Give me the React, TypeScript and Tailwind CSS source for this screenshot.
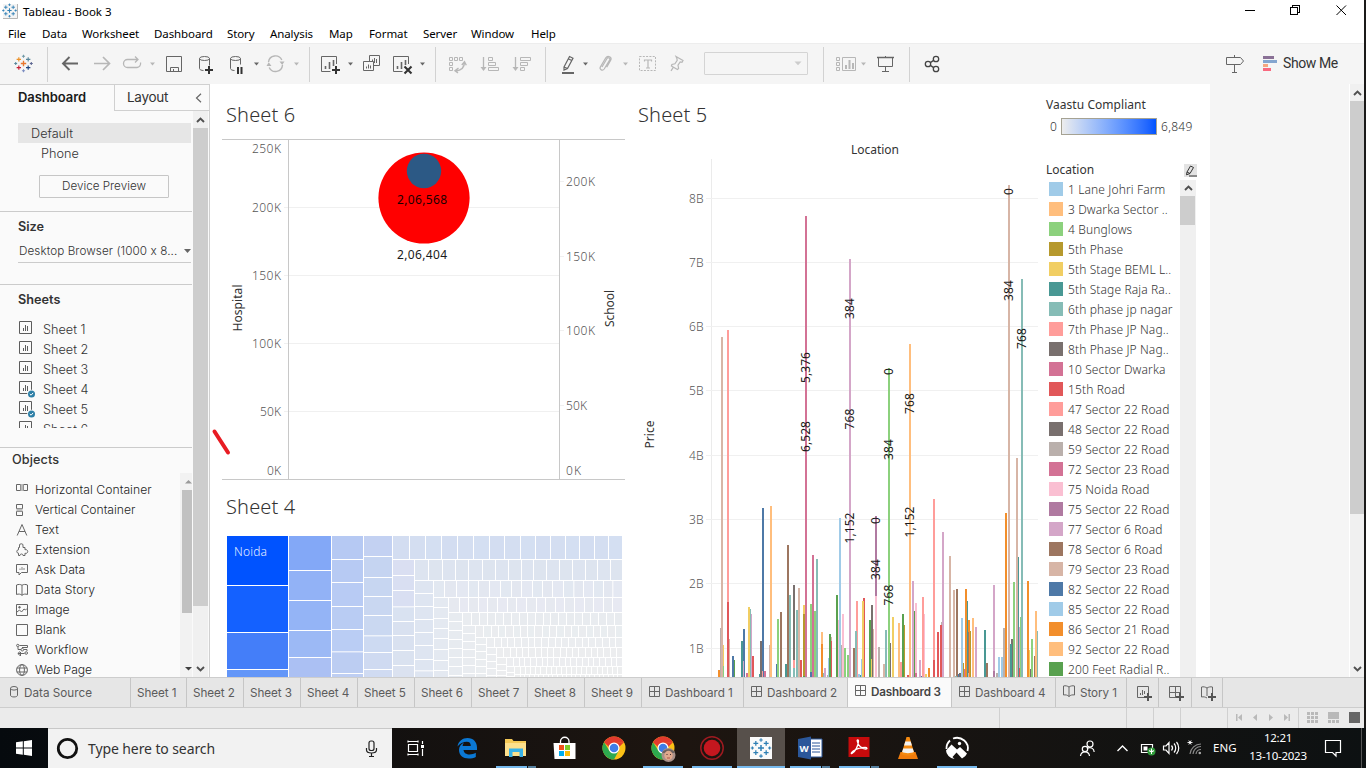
import React from "react";

const TABLEAU = "font-['Noto_Sans',sans-serif]";
const BENTON = "font-['Inter',sans-serif]";

type CellProps = { x: number; w: number; y?: number; h?: number; className?: string; children?: React.ReactNode };

/* Fixed-size drawing cell; its coordinates are window coordinates. */
function Cell({ x, w, y = 44, h = 40, className = "", children }: CellProps) {
  return (
    <svg width={w} height={h} viewBox={`${x} ${y} ${w} ${h}`} className={`block shrink-0 ${className}`} fill="none">
      {children}
    </svg>
  );
}

const Sep = ({ x }: { x: number }) => <path d={`M${x + 0.5} 47V82`} stroke="#d2d2d2" />;
const Caret = ({ x, c = "#666" }: { x: number; c?: string }) => <path d={`M${x - 2.5} 62.5h5l-2.5 3z`} fill={c} />;

function Plus({ x, y, s, c, w = 1 }: { x: number; y: number; s: number; c: string; w?: number }) {
  return <path d={`M${x - s} ${y}h${2 * s}M${x} ${y - s}v${2 * s}`} stroke={c} strokeWidth={w} />;
}

function TableauMark({ x, y, k, mono }: { x: number; y: number; k: number; mono?: string }) {
  const c = (s: string) => mono ?? s;
  return (
    <g>
      <Plus x={x} y={y} s={2.6 * k} c={c("#e8762d")} w={1.3 * k} />
      <Plus x={x - 4.5 * k} y={y - 4 * k} s={2.1 * k} c={c("#eb9129")} w={1.1 * k} />
      <Plus x={x + 4.5 * k} y={y - 4 * k} s={2.1 * k} c={c("#59879b")} w={1.1 * k} />
      <Plus x={x - 4.5 * k} y={y + 4 * k} s={2.1 * k} c={c("#c72035")} w={1.1 * k} />
      <Plus x={x + 4.5 * k} y={y + 4 * k} s={2.1 * k} c={c("#1f447e")} w={1.1 * k} />
      <Plus x={x} y={y - 7 * k} s={1.5 * k} c={c("#7199a6")} w={k} />
      <Plus x={x} y={y + 7 * k} s={1.5 * k} c={c("#7c8dc1")} w={k} />
      <Plus x={x - 7.5 * k} y={y} s={1.4 * k} c={c("#59879b")} w={k} />
      <Plus x={x + 7.5 * k} y={y} s={1.4 * k} c={c("#5b6591")} w={k} />
    </g>
  );
}

function TitleBar() {
  return (
    <div className="flex h-[24px] shrink-0 items-center bg-white">
      <Cell x={0} w={22} y={0} h={24}>
        <rect x="3" y="4" width="14" height="14" fill="#f4f4f4" />
        <path d="M3 18.5h14.5V4" stroke="#b5b5b5" />
        <TableauMark x={9.5} y={10.5} k={0.82} mono="#2f7fb5" />
      </Cell>
      <span className={`${TABLEAU} flex-1 pl-[1px] text-[11.5px] leading-[24px] tracking-[-0.02px] text-black`}>Tableau - Book 3</span>
      <Cell x={1230} w={134} y={0} h={24}>
        <g stroke="#000" shapeRendering="crispEdges">
          <path d="M1245 10.5h10" />
          <path d="M1290.5 7.5h7v7h-7zM1292.5 7V5.5h7v7h-2" />
        </g>
        <path d="M1336.5 5.5l9.500 9.500M1346 5.500l-9.500 9.500" stroke="#000" />
      </Cell>
    </div>
  );
}

const MENUS: [string, string][] = [
  ["File", "w-[34px]"], ["Data", "w-[40px]"], ["Worksheet", "w-[72px]"], ["Dashboard", "w-[73px]"],
  ["Story", "w-[43px]"], ["Analysis", "w-[59px]"], ["Map", "w-[40px]"], ["Format", "w-[54px]"],
  ["Server", "w-[48px]"], ["Window", "w-[60px]"], ["Help", "w-[40px]"],
];

function MenuBar() {
  return (
    <div className={`${TABLEAU} flex h-[19px] shrink-0 bg-white pl-2 text-[11.5px] leading-[19px] tracking-[-0.1px] text-black`}>
      {MENUS.map(([m, w]) => (
        <span key={m} className={`${w} shrink-0 whitespace-nowrap`}>{m}</span>
      ))}
    </div>
  );
}

function Toolbar() {
  const d = "#666";
  const g = "#b7b7b7";
  const k = "#333";
  return (
    <div className="flex h-[41px] shrink-0 border-t border-[#ededed] bg-[#f5f5f5]">
      <Cell x={0} w={48}>
        <TableauMark x={23.5} y={63.5} k={1.04} />
        <Sep x={47} />
      </Cell>
      <Cell x={48} w={70}>
        <path d="M63 63.500H78M69.500 57L63 63.500l6.500 6.500" stroke={d} strokeWidth="1.900" />
        <path d="M94 63.500h15M103 57l6.500 6.500L103 70" stroke={g} strokeWidth="1.700" />
      </Cell>
      <Cell x={118} w={42}>
        <path d="M132 59.500h-4.500a4 4 0 0 0 0 8h9.500a4 4 0 0 0 3.500-5M130.500 59.500h7M135 56.500l3 3-3 3" stroke={g} strokeWidth="1.300" />
        <Caret x={152.5} c={g} />
      </Cell>
      <Cell x={160} w={30}>
        <path d="M166.500 56.500h15v15h-15zM170.500 71.500v-4h8v4M173.500 69v2.500" stroke={d} />
      </Cell>
      <Cell x={190} w={74}>
        <ellipse cx="204.500" cy="58.500" rx="5" ry="2" stroke={d} />
        <path d="M199.500 58.500v10c0 1.200 2 2 4 2M209.500 58.500v7" stroke={d} />
        <Plus x={209} y={70} s={4} c={k} w={2} />
        <ellipse cx="235.500" cy="58.500" rx="5" ry="2" stroke={d} />
        <path d="M230.500 58.500v10c0 1.200 2 2 4 2M240.500 58.500v6" stroke={d} />
        <path d="M238 67v7M241.500 67v7" stroke={k} strokeWidth="2" />
        <Caret x={256.5} />
      </Cell>
      <Cell x={264} w={46}>
        <path d="M268.500 62a7 7 0 0 1 13.300-2M282.500 65a7 7 0 0 1-13.300 2.500" stroke={g} strokeWidth="1.400" />
        <path d="M279.500 61.500h5l-2.300 3.500zM266.500 66h5l-2.800-3.800z" fill={g} />
        <Caret x={296.5} c={g} />
        <Sep x={309} />
      </Cell>
      <Cell x={310} w={46}>
        <path d="M336.500 64v-7.500h-15v15h9" stroke={d} />
        <path d="M325.500 69v-3M329.500 69v-7M333.500 66v-6" stroke={d} strokeWidth="1.600" />
        <Plus x={336} y={70} s={4} c={k} w={2} />
        <Caret x={350.5} />
      </Cell>
      <Cell x={356} w={80}>
        <path d="M369.500 61v-5.500h10v10h-5.500M370 61.500h-6.500v9h10v-9z" stroke={d} />
        <path d="M372.500 61v-1.500M374.500 63v-5M376.500 63v-4M366.500 68.500v-2M368.500 68.500v-4M370.500 68.500v-3" stroke={d} />
        <path d="M408.500 64v-7.500h-15v15h9" stroke={d} />
        <path d="M397.500 69v-3M401.500 69v-7M405.500 65v-5" stroke={d} strokeWidth="1.600" />
        <path d="M404.500 66.500l7 7M411.500 66.500l-7 7" stroke={k} strokeWidth="2.100" />
        <Caret x={422.5} />
        <Sep x={435} />
      </Cell>
      <Cell x={436} w={110}>
        <path d="M449.500 57.500h3v3h-3zM454.500 57.500h3v3h-3zM459.500 57.500h3v3h-3zM449.500 62.500h3v3h-3zM449.500 67.500h3v3h-3z" stroke={g} />
        <path d="M464.500 62c0 5-3 8.500-9 9M461.800 65l2.700-3.300 1.800 3.500M458.500 68l-3.500 2.800 3 2" stroke={g} strokeWidth="1.400" />
        <path d="M483.500 57v12" stroke={g} strokeWidth="1.300" /><path d="M480.500 67h6l-3 4z" fill={g} />
        <path d="M488.500 57.500h4v3h-4zM488.500 62.500h7v3h-7zM488.500 67.500h10v3h-10z" stroke={g} />
        <path d="M515.500 57v12" stroke={g} strokeWidth="1.300" /><path d="M512.500 67h6l-3 4z" fill={g} />
        <path d="M520.500 57.500h10v3h-10zM520.500 62.500h7v3h-7zM520.500 67.500h4v3h-4z" stroke={g} />
        <Sep x={545} />
      </Cell>
      <Cell x={546} w={48}>
        <path d="M562 73h12" stroke={d} strokeWidth="2" />
        <path d="M564 67l5.500-10.500 3.500 1.800L567.500 68.500l-3.500 1.500zM564 67l3.500 1.500M568.300 58.800l3.400 1.700" stroke={d} strokeWidth="1.200" />
        <Caret x={585.5} />
      </Cell>
      <Cell x={594} w={106}>
        <path d="M602 67l5-8.500c1-1.700 3.500-.3 2.600 1.500l-5.400 9c-1.600 2.400-5 .5-3.900-1.900l5.500-9.300c2-3 6.500-.8 4.900 2.500l-4 7" stroke={g} strokeWidth="1.200" />
        <Caret x={625.5} c={g} />
        <rect x="639.500" y="56.500" width="16" height="14" stroke={g} strokeDasharray="2 1.300" />
        <path d="M644.500 61.500v-1.500h7v1.500M648 60v8M646 68h4" stroke={g} strokeWidth="1.200" />
        <path d="M676 56.500l7 4-1 1.800-1.800-.3-2.200 3.200.6 3.300-1.200 1.100-6-3.600.5-1.500 3-.7 2.300-3.500-.3-1.800zM673.600 66.800l-2.600 4" stroke={g} strokeWidth="1.200" />
      </Cell>
      <div className="mt-[8px] ml-[4px] flex h-[23px] w-[104px] items-center justify-end rounded-[1px] border border-[#d4d4d4] pr-[5px]">
        <svg width="8" height="5" viewBox="0 0 8 5"><path d="M.5 .5h7L4 4.200z" fill="#ccc" /></svg>
      </div>
      <Cell x={808} w={16}><Sep x={823} /></Cell>
      <Cell x={824} w={86}>
        <path d="M836.500 57.500h3v3h-3zM836.500 62.500h3v3h-3zM836.500 67.500h3v3h-3zM842.500 57.500h13v13h-13z" stroke={g} />
        <path d="M846 69v-4M849.500 69v-9M853 69v-6" stroke={g} strokeWidth="2" />
        <Caret x={863.5} c={g} />
        <path d="M877 57.500h17" stroke={d} strokeWidth="1.500" />
        <path d="M878.500 58v8.500h14V58M885.500 67v4M882 71.500h7M885.500 56v1" stroke={d} />
        <Sep x={909} />
      </Cell>
      <Cell x={910} w={50}>
        <g stroke="#444" strokeWidth="1.300">
          <circle cx="928" cy="64" r="2.700" /><circle cx="936" cy="59" r="2.700" /><circle cx="936" cy="69" r="2.700" />
          <path d="M930.300 62.600l3.400-2.200M930.300 65.400l3.400 2.200" />
        </g>
      </Cell>
      <div className="flex-1" />
      <Cell x={1210} w={73}>
        <path d="M1226.500 57.500h14l3 3.500-3 3.500h-14zM1234.500 55v2.500M1234.500 65v7M1232 72.500h5" stroke={d} />
        <path d="M1263 56h11v3h-11z" fill="#8a7196" /><path d="M1263 60h14v3h-14z" fill="#84a5cf" />
        <path d="M1263 64h5v3h-5z" fill="#f5a67f" /><path d="M1263 68h8v3h-8z" fill="#f9697f" />
      </Cell>
      <span className="w-[81px] font-['Roboto',sans-serif] text-[14px] leading-[39px] tracking-[-0.4px] text-[#333]">Show Me</span>
    </div>
  );
}

const Chevron = ({ down = false }: { down?: boolean }) => (
  <svg width="9" height="6" viewBox="0 0 9 6" className={down ? "rotate-180" : ""}>
    <path d="M1 5L4.500 1.500 8 5" fill="none" stroke="#505050" strokeWidth="1.900" />
  </svg>
);

function SheetIcon({ used }: { used?: boolean }) {
  return (
    <svg width="18" height="20" viewBox="0 0 18 20" fill="none" className="shrink-0">
      <path d="M.5 2.500h12v12H.5z" stroke="#5c5c5c" />
      <path d="M4.500 12V9M6.500 12V6M8.500 12V7" stroke="#5c5c5c" />
      {used && (
        <g>
          <circle cx="12.500" cy="15" r="4.300" fill="#fafafa" />
          <circle cx="12.500" cy="15" r="3.500" fill="#2d7fa6" />
          <path d="M10.800 15l1.300 1.200 2-2.300" stroke="#fff" />
        </g>
      )}
    </svg>
  );
}

const OBJECTS: [string, React.ReactNode, string][] = [
  ["Horizontal Container", <><path d="M.5 4.500h4v6h-4zM7.500 4.500h4v6h-4z" /><path d="M5 4.500h2v6H5z" fill="#bbb" stroke="#bbb" /></>, "tracking-[0.02px]"],
  ["Vertical Container", <><path d="M.5 4.500h6v4h-6zM.5 11.500h6v4h-6z" /><path d="M1 9h5v2H1z" fill="#bbb" stroke="#bbb" /></>, "tracking-[-0.02px]"],
  ["Text", <path d="M1.200 15.500L6 4.500l4.800 11M3 11.500h6" />, ""],
  ["Extension", <path d="M3.500 7.500V6a1.800 1.800 0 1 1 3.500 0v1.500h2v2.300a1.900 1.900 0 1 1 0 3.400v2.300H7a1.500 1.500 0 1 0-3 0H2.500v-2.300a1.700 1.700 0 1 1 0-3.400V7.500z" />, ""],
  ["Ask Data", <><path d="M.5 4.500h11v8H5.500L3 15v-2.500H.5z" /><path d="M4 10V8.500M6 10V7M8 10V8" stroke="#aaa" strokeWidth="1.500" /></>, ""],
  ["Data Story", <path d="M.5 5c2-.8 4-.8 5.500.3C7.500 4.200 9.500 4.200 11.500 5v9.500c-2-.8-4-.5-5.500.8-1.500-1.300-3.500-1.600-5.500-.8zM6 5.300v10" />, "tracking-[0.1px]"],
  ["Image", <><path d="M.5 4.500h11v11H.5z" /><path d="M1 12l2.500-2 2 2 2.500-3 1.500 1L11 8.500" /><circle cx="3.500" cy="7.300" r=".8" fill="#666" /></>, "tracking-[-0.1px]"],
  ["Blank", <path d="M.5 4.500h11v11H.5z" />, ""],
  ["Workflow", <><circle cx="1.800" cy="5.500" r="1.200" /><path d="M3.500 5.500h8v2H6M2 7v2.500h3" /><circle cx="6.300" cy="9.700" r="1.300" /><circle cx="10.200" cy="13" r="1.300" /><path d="M8 9.500h3v1.500M8.500 13.500H2M4 11.500l-2.200 2 2.200 2M4.500 12v4" /></>, ""],
  ["Web Page", <><circle cx="6" cy="10" r="5.400" /><ellipse cx="6" cy="10" rx="2.400" ry="5.400" /><path d="M.8 8h10.400M.8 12h10.400" /></>, "tracking-[-0.1px]"],
];

function Sidebar() {
  return (
    <div className={`${BENTON} flex w-[210px] shrink-0 flex-col overflow-hidden border-t border-r border-[#d0d0d0] bg-[#fafafa] text-[12.700px] font-light text-[#333]`}>
      <div className="flex h-[26px] shrink-0">
        <div className="w-[114px] pl-[18px] text-[13px] leading-[25px] font-semibold tracking-[-0.05px] text-[#1b1b1b]">Dashboard</div>
        <div className="flex flex-1 items-center justify-between border-b border-l border-[#d0d0d0] pr-[7px] pl-[12px] text-[13.500px] leading-[25px] font-normal text-[#333]">
          <span className="tracking-[-0.3px]">Layout</span>
          <svg width="7" height="10" viewBox="0 0 7 10"><path d="M6 .8L1.500 5 6 9.200" fill="none" stroke="#666" strokeWidth="1.200" /></svg>
        </div>
      </div>
      <div className="flex min-h-0 flex-1">
        <div className="flex w-[192px] shrink-0 flex-col overflow-hidden">
          <div className="flex h-[101px] shrink-0 flex-col border-b border-[#cbcbcb] pt-[12px]">
            <div className="ml-[18px] h-[20px] w-[173px] bg-[#e6e6e6] pl-[13px] leading-[21px]">Default</div>
            <div className="h-[20px] pl-[41px] leading-[21px]">Phone</div>
            <div className="mt-[12px] ml-[39px] h-[23px] w-[130px] rounded-[1px] border border-[#c6c6c6] text-center text-[11.700px] leading-[21px]">Device Preview</div>
          </div>
          <div className="flex h-[73px] shrink-0 flex-col border-b border-[#cbcbcb] pl-[18px]">
            <div className="mt-[5px] h-[20px] text-[12.700px] leading-[20px] font-semibold text-[#333]">Size</div>
            <div className="mt-[2px] flex h-[24px] w-[173px] items-center justify-between border-b border-[#cbcbcb] pl-[1px] text-[11.700px] tracking-[0.08px]">
              <span className="pt-[2px]">Desktop Browser (1000 x 8...</span>
              <svg width="7" height="4" viewBox="0 0 7 4"><path d="M0 0h7L3.500 4z" fill="#666" /></svg>
            </div>
          </div>
          <div className="h-[163px] shrink-0 border-b border-[#cbcbcb] pl-[18px]">
            <div className="mt-[4px] h-[20px] text-[12.700px] leading-[21px] font-semibold text-[#333]">Sheets</div>
            <div className="mt-[10px] flex h-[109px] flex-col overflow-hidden pl-[1px]">
              {[1, 2, 3, 4, 5, 6].map((n) => (
                <div key={n} className="flex h-[20px] shrink-0 leading-[22px]">
                  <SheetIcon used={n === 4 || n === 5} />
                  <span className="pl-[6px]">Sheet {n}</span>
                </div>
              ))}
            </div>
          </div>
          <div className="flex min-h-0 flex-1 flex-col">
            <div className="h-[25px] shrink-0 pl-[12px] text-[12.700px] leading-[24px] font-medium tracking-[0.1px] text-[#333]">Objects</div>
            <div className="flex min-h-0 flex-1">
              <div className="flex w-[180px] flex-col overflow-hidden pt-[7px] pl-[16px] text-[12.200px] text-[#1f1f1f]">
                {OBJECTS.map(([name, art, tr]) => (
                  <div key={name} className="flex h-[20px] shrink-0 leading-[20px]">
                    <svg width="13" height="20" viewBox="0 0 13 20" fill="none" stroke="#666" className="shrink-0">{art}</svg>
                    <span className={`pl-[6px] whitespace-nowrap ${tr}`}>{name}</span>
                  </div>
                ))}
              </div>
              <div className="flex w-[12px] flex-col items-end bg-[#f2f2f2]">
                <svg width="10" height="17" viewBox="0 0 10 17" className="shrink-0"><path d="M3 10.500L6.500 7 10 10.500z" fill="#999" /></svg>
                <div className="h-[123px] w-[10px] shrink-0 bg-[#c1c1c1]" />
                <svg width="10" height="17" viewBox="0 0 10 17" className="mt-auto shrink-0"><path d="M3 7h7L6.500 10.500z" fill="#404040" /></svg>
              </div>
            </div>
          </div>
        </div>
        <div className="ml-[1px] flex w-[15px] shrink-0 flex-col items-center bg-[#f0f0f0]">
          <div className="flex h-[17px] shrink-0 items-center"><Chevron /></div>
          <div className="h-[478px] w-full shrink-0 bg-[#cdcdcd]" />
          <div className="mt-auto flex h-[17px] shrink-0 items-center"><Chevron down /></div>
        </div>
      </div>
    </div>
  );
}

type TProps = { x: number; y: number; len?: number; a?: "start" | "middle" | "end"; c?: string; s?: number; children: React.ReactNode; w?: number };
function T({ x, y, len, a = "start", c = "#555", s = 12, w = 300, children }: TProps) {
  return (
    <text x={x} y={y + s * 0.36} textLength={len} textAnchor={a} fill={c} fontSize={s} fontWeight={w}>{children}</text>
  );
}
function V({ x, y, len, s = 12, c = "#1a1a1a", children }: { x: number; y: number; len: number; s?: number; c?: string; children: React.ReactNode }) {
  return (
    <text transform={`translate(${x + s * 0.36} ${y}) rotate(-90)`} textLength={len} textAnchor="middle" fill={c} fontSize={s}>{children}</text>
  );
}

function BubbleChart() {
  return (
    <Cell x={210} y={139} w={415} h={341} className={TABLEAU}>
      <g stroke="#f0f0f0">
        {[207.5, 275.5, 343.5, 411.5].map((y) => <path key={y} d={`M284 ${y}H559`} />)}
        {[181.5, 256.5, 330.5, 405.5].map((y) => <path key={y} d={`M560 ${y}h4`} />)}
      </g>
      <path d="M222 139.500H625M222 479.500H625M288.500 140V479M559.500 140V479" stroke="#c8c8c8" />
      <circle cx="424" cy="198" r="45.600" fill="#f00" />
      <circle cx="424" cy="171" r="17.200" fill="#2c5985" />
      <T x={281} y={149} a="end" len={29}>250K</T>
      <T x={281} y={208} a="end" len={29}>200K</T>
      <T x={281} y={276} a="end" len={29}>150K</T>
      <T x={281} y={344} a="end" len={29}>100K</T>
      <T x={281} y={412} a="end" len={21}>50K</T>
      <T x={281} y={471} a="end" len={14}>0K</T>
      <T x={566} y={182} len={29}>200K</T>
      <T x={566} y={257} len={29}>150K</T>
      <T x={566} y={331} len={29}>100K</T>
      <T x={566} y={406} len={21}>50K</T>
      <T x={566} y={471} len={15}>0K</T>
      <T x={397} y={200} len={50} c="#1a0000" w={400}>2,06,568</T>
      <T x={397} y={255} len={50} c="#1a1a1a" w={400}>2,06,404</T>
      <V x={238} y={308} len={47} c="#333">Hospital</V>
      <V x={610} y={308.500} len={37} c="#333">School</V>
      <path d="M214.500 431.500L228 452.500" stroke="#e81c23" strokeWidth="4" strokeLinecap="round" />
    </Cell>
  );
}

/* Tree map strips in a 3x grid: columns are split vertically, rows horizontally. */
type Strip = { a: number; b: number; from: number; cuts: number[]; fill: string[] };
const COLS: Strip[] = [
  { a: 21, b: 204, from: 138, cuts: [285, 426, 537, 580], fill: ["#0053ff", "#1461ff", "#447ef9", "#6396f8"] },
  { a: 207, b: 333, from: 138, cuts: [240, 330, 420, 501, 580], fill: ["#83a8f7", "#92b2f6", "#94b4f6", "#9cb9f5", "#abc0f3"] },
  { a: 336, b: 429, from: 138, cuts: [207, 276, 348, 417, 484, 549, 580], fill: ["#b6c9f3", "#b7caf3", "#b8cbf4", "#b9ccf3", "#bacdf4", "#bccdf2", "#becef2"] },
  { a: 432, b: 516, from: 138, cuts: [198, 261, 318, 375, 436, 486, 537, 580], fill: ["#c3d1f2", "#c5d4f1", "#c7d6f1", "#c9d7f1", "#cad8f1", "#cddaf2", "#cfdaf1", "#d0dbf2"] },
  { a: 519, b: 582, from: 210, cuts: [255, 300, 349, 393, 435, 480, 525, 580], fill: ["#dadff2", "#d9dff2", "#d9dff2", "#d9e2f1", "#d9e1f0", "#d9e1f0", "#dae2f0", "#dbe2f0"] },
  { a: 585, b: 639, from: 273, cuts: [309, 348, 387, 426, 465, 507, 541, 580], fill: ["#dee5f1"] },
  { a: 642, b: 684, from: 324, cuts: [351, 384, 414, 444, 477, 510, 540, 580], fill: ["#e4e9f1"] },
  { a: 687, b: 726, from: 369, cuts: [393, 420, 447, 474, 501, 528, 555, 580], fill: ["#e7ebf0"] },
  { a: 729, b: 765, from: 408, cuts: [429, 453, 477, 501, 525, 549, 580], fill: ["#e9ecf0"] },
  { a: 768, b: 798, from: 444, cuts: [462, 483, 507, 528, 549, 580], fill: ["#eaedf0"] },
  { a: 801, b: 828, from: 474, cuts: [492, 513, 534, 555, 580], fill: ["#ebedf0"] },
  { a: 831, b: 858, from: 504, cuts: [522, 540, 555, 580], fill: ["#ecedef"] },
  { a: 861, b: 882, from: 531, cuts: [546, 558, 580], fill: ["#ecedef"] },
];
const step = (a: number, n: number) => Array.from({ length: n }, (_, i) => Math.round((a + ((1206 - a) * (i + 1)) / n) / 3) * 3);
const ROWS: Strip[] = [
  { a: 138, b: 207, from: 519, cuts: [567, 615, 663, 711, 759, 807, 852, 900, 945, 990, 1035, 1077, 1122, 1164, 1206], fill: ["#d3ddf1", "#d4def1", "#d4dff2"] },
  { a: 210, b: 270, from: 585, cuts: [624, 666, 705, 744, 786, 825, 864, 903, 939, 978, 1017, 1056, 1095, 1131, 1170, 1206], fill: ["#dde4f0", "#dde4ef"] },
  { a: 273, b: 321, from: 642, cuts: [672, 708, 744, 774, 807, 840, 873, 903, 936, 966, 996, 1029, 1060, 1089, 1119, 1149, 1177, 1206], fill: ["#e2e8f1", "#e3e7f0", "#e4e8f2"] },
  { a: 324, b: 366, from: 687, cuts: step(687, 18), fill: ["#e6e9f0", "#e7e9f2"] },
  { a: 369, b: 405, from: 729, cuts: step(729, 20), fill: ["#e9ecf0", "#e8ebef"] },
  { a: 408, b: 441, from: 768, cuts: step(768, 20), fill: ["#eaecef", "#e9edf0"] },
  { a: 444, b: 471, from: 801, cuts: step(801, 20), fill: ["#ebedf0"] },
  { a: 474, b: 501, from: 831, cuts: step(831, 20), fill: ["#ecedef"] },
  { a: 504, b: 528, from: 861, cuts: step(861, 20), fill: ["#ecedf0"] },
  { a: 531, b: 552, from: 885, cuts: step(885, 21), fill: ["#edeeef"] },
  { a: 555, b: 580, from: 885, cuts: step(885, 23), fill: ["#edeeef"] },
];

function TreeMap() {
  const rects: React.ReactNode[] = [];
  const lay = (s: Strip, vertical: boolean, id: string) => {
    let p = s.from;
    s.cuts.forEach((c, i) => {
      const fill = s.fill[i % s.fill.length];
      rects.push(
        vertical
          ? <rect key={id + i} x={s.a} y={p} width={s.b - s.a} height={c - p} fill={fill} />
          : <rect key={id + i} x={p} y={s.a} width={c - p} height={s.b - s.a} fill={fill} />
      );
      p = c + 3;
    });
  };
  COLS.forEach((s, i) => lay(s, true, `c${i}-`));
  ROWS.forEach((s, i) => lay(s, false, `r${i}-`));
  return (
    <Cell x={210} y={536} w={415} h={141} className={TABLEAU}>
      <g transform="translate(220 490) scale(.333333)">{rects}</g>
      <T x={234} y={552} len={33} c="#e6eeff">Noida</T>
    </Cell>
  );
}

const C = {
  ta: "#d7b5a6", pi: "#ff9d9a", re: "#e15759", gy: "#79706e", lg: "#bab0ac", bl: "#4e79a7", lb: "#a0cbe8",
  or: "#f28e2b", lo: "#ffbe7d", gr: "#59a14f", gn: "#8cd17d", ol: "#b6992d", ye: "#f1ce63", te: "#499894",
  lt: "#86bcb6", ma: "#d37295", lp: "#fabfd2", pu: "#b07aa1", lu: "#d4a6c8", br: "#9d7660",
};
type Bar = [number, number, keyof typeof C, number?];
const BARS: Bar[] = [
  [264, 810, "or"], [270, 684, "lg"], [273, -189, "ta"], [279, 735, "ye", 3], [279, 798, "gn", 3], [291, -210, "pi"], [291, 606, "re"],
  [297, 717, "ta", 3], [306, 768, "bl"], [312, 780, "gr", 3], [333, 723, "te"], [339, 687, "bl"], [339, 783, "lu", 3], [348, 819, "ma"],
  [354, 621, "ye"], [360, 627, "lt", 3], [363, 642, "lu", 3], [366, 768, "re"], [387, 822, "te", 3], [390, 723, "gy"], [396, 324, "bl"],
  [396, 813, "pi", 3], [402, 813, "ma"], [417, 735, "ta"], [420, 318, "lo"], [438, 792, "bl"], [441, 657, "gn"], [450, 636, "br"],
  [465, 792, "te"], [471, 435, "br"], [477, 585, "lt"], [489, 555, "gy"], [489, 780, "pi"], [489, 804, "lt"], [498, 630, "lt"],
  [504, 564, "ta"], [510, 780, "re"], [519, 615, "ye"], [519, 642, "ol"], [525, -552, "ma"], [519, 828, "gr"], [540, 612, "gn"],
  [540, 816, "bl"], [546, 465, "ma"], [552, 633, "gn"], [558, 477, "lt"], [573, 696, "lo"], [573, 732, "or"], [579, 819, "lt", 3],
  [582, 804, "lu"], [591, 825, "lg"], [594, 774, "lb"], [597, 702, "gr"], [603, 711, "ta", 3], [603, 723, "re", 3], [618, 585, "gr"],
  [624, 660, "lp"], [627, 354, "lb"], [633, 735, "lg"], [636, 642, "lp"], [642, 744, "gn"], [651, 765, "gn"], [657, -423, "lu"],
  [669, 744, "br"], [678, 603, "pi"], [675, 693, "lt"], [684, 822, "lb"], [690, 825, "te", 3], [693, 777, "lb"],
  [699, 594, "re"], [696, 603, "ye"], [717, 660, "gr"], [723, 615, "gy"], [729, 687, "ta", 3], [723, 777, "ye", 3], [735, 348, "pu"],
  [735, 588, "lp"], [744, 741, "lg"], [759, 792, "ta"], [765, 690, "lt"], [774, -96, "gn"], [780, 729, "gy", 3], [786, 651, "ye"],
  [804, 669, "lo"], [810, 786, "pi"], [816, 642, "gr"], [822, 675, "ol", 3], [831, 825, "re"], [837, -168, "lo"], [846, 543, "lu"],
  [852, 633, "gr", 3], [855, 609, "lp"], [855, 819, "ma"], [867, 780, "lu"], [873, 828, "bl", 3], [876, 591, "pi"], [882, 642, "lp", 3],
  [885, 822, "ye"], [894, 804, "or"], [909, 297, "pi"], [909, 780, "re"], [921, 696, "re"], [933, 666, "lg"], [930, 675, "re"],
  [936, 396, "lu"], [957, 468, "ta"], [969, 570, "ta"], [978, 567, "br"], [975, 828, "lt"], [984, 822, "bl", 3], [987, 819, "gy"],
  [993, 654, "lb"], [999, 789, "ol", 3], [1005, 567, "or"], [1002, 807, "ma", 3], [1011, 603, "te", 3], [1020, 693, "ol", 3],
  [1014, 660, "or", 6], [1014, 696, "br", 3], [1014, 819, "ta", 3], [1026, 654, "lo"], [1035, 681, "lu"], [1062, 690, "te"], [1068, 789, "br"],
  [1089, 555, "lu"], [1089, 813, "pu"], [1098, 819, "lg"], [1104, 771, "lb"], [1113, 771, "lb"], [1119, 684, "lg"], [1125, 339, "or"],
  [1143, 717, "gy"], [1140, 732, "te"], [1134, -645, "ta"], [1149, 546, "gn"], [1158, 174, "ta"], [1164, 471, "te", 3], [1167, 681, "lu", 3],
  [1167, 804, "re", 3], [1170, 651, "gn"], [1173, -363, "lt"], [1191, 543, "or"], [1197, 750, "ye", 3], [1200, 807, "gy"], [1203, 717, "gn"],
  [1212, 768, "br"], [1215, 633, "lo"], [1221, 693, "lt", 3],
];
const MARKS: [string, number, number][] = [
  ["5,376", 806, 367.5], ["6,528", 806, 436.5], ["384", 850, 308.5], ["768", 850, 419], ["1,152", 850, 528], ["0", 889, 371.5],
  ["384", 889, 449.5], ["768", 889, 595], ["0", 876, 520.5], ["384", 876, 569.5], ["768", 910, 403.5], ["1,152", 910, 522],
  ["0", 1009, 191.5], ["384", 1009, 290.5], ["768", 1022, 338.5],
];

function PriceChart() {
  return (
    <Cell x={630} y={140} w={410} h={537} className={TABLEAU}>
      <path d="M711.500 159V677" stroke="#ebebeb" />
      {[198.5, 262.5, 326.5, 390.5, 455.5, 519.5, 583.5, 648.5].map((y, i) => (
        <g key={y}>
          <path d={`M706 ${y}H1038`} stroke="#f0f0f0" />
          <T x={703.5} y={y + 0.5} a="end" len={14.500}>{`${8 - i}B`}</T>
        </g>
      ))}
      <g transform="translate(630 400) scale(.333333)">
        {BARS.map(([x, y, c, w = 6], i) => <rect key={i} x={x} y={y} width={w} height={840 - y} fill={C[c]} />)}
      </g>
      {MARKS.map(([t, x, y], i) => <V key={i} x={x} y={y} len={t.length === 5 ? 31 : t.length === 3 ? 21 : 7}>{t}</V>)}
      <T x={851} y={150} len={48} c="#333" w={400}>Location</T>
      <V x={650} y={434.500} len={28} c="#333">Price</V>
    </Cell>
  );
}

const LEGEND: [string, string][] = [
  ["1 Lane Johri Farm", "bg-[#a0cbe8]"], ["3 Dwarka Sector ..", "bg-[#ffbe7d]"], ["4 Bunglows", "bg-[#8cd17d]"], ["5th Phase", "bg-[#b6992d]"],
  ["5th Stage BEML L..", "bg-[#f1ce63]"], ["5th Stage Raja Ra..", "bg-[#499894]"], ["6th phase jp nagar", "bg-[#86bcb6]"], ["7th Phase JP Nag..", "bg-[#ff9d9a]"],
  ["8th Phase JP Nag..", "bg-[#79706e]"], ["10 Sector Dwarka", "bg-[#d37295]"], ["15th Road", "bg-[#e15759]"], ["47 Sector 22 Road", "bg-[#ff9d9a]"],
  ["48 Sector 22 Road", "bg-[#79706e]"], ["59 Sector 22 Road", "bg-[#bab0ac]"], ["72 Sector 23 Road", "bg-[#d37295]"], ["75 Noida Road", "bg-[#fabfd2]"],
  ["75 Sector 22 Road", "bg-[#b07aa1]"], ["77 Sector 6 Road", "bg-[#d4a6c8]"], ["78 Sector 6 Road", "bg-[#9d7660]"], ["79 Sector 23 Road", "bg-[#d7b5a6]"],
  ["82 Sector 22 Road", "bg-[#4e79a7]"], ["85 Sector 22 Road", "bg-[#a0cbe8]"], ["86 Sector 21 Road", "bg-[#f28e2b]"], ["92 Sector 22 Road", "bg-[#ffbe7d]"],
  ["200 Feet Radial R..", "bg-[#59a14f]"],
];

function Legends() {
  return (
    <div className={`${TABLEAU} flex w-[170px] shrink-0 flex-col overflow-hidden pl-[6px] text-[12px] text-[#333]`}>
      <div className="mt-[11px] h-[20px] shrink-0 text-[12px] leading-[20px] tracking-[0.05px]">Vaastu Compliant</div>
      <div className="mt-[3px] flex h-[17px] shrink-0 items-center pl-[4px] text-[12px] font-light">
        <span className="w-[11px]">0</span>
        <div className="h-[17px] w-[96px] border border-[#a5a293] bg-linear-to-r from-[#ededed] to-[#0053ff]" />
        <span className="pl-[4px] tracking-[0.3px]">6,849</span>
      </div>
      <div className="mt-[25px] flex h-[20px] shrink-0 items-center justify-between pr-[13px]">
        <span className="text-[12px]">Location</span>
        <svg width="13" height="13" viewBox="0 0 13 13" fill="none" className="mt-px bg-[#e3e3e3]">
          <path d="M3 8l3.500-6 3 1.500L6 9.500l-3.500 1.300zM5 12h8" stroke="#333" />
          <path d="M3 8l3 1.500" stroke="#333" />
        </svg>
      </div>
      <div className="flex min-h-0 flex-1">
        <div className="flex w-[134px] shrink-0 flex-col overflow-hidden pl-[3px] font-light">
          {LEGEND.map(([n, c]) => (
            <div key={n} className="flex h-[20px] shrink-0">
              <div className={`mt-[2px] h-[14px] w-[14px] shrink-0 ${c}`} />
              <span className="pl-[5px] leading-[19px] tracking-[0.12px] whitespace-nowrap">{n}</span>
            </div>
          ))}
        </div>
        <div className="flex w-[16px] flex-col items-center bg-[#f0f0f0]">
          <div className="flex h-[16px] shrink-0 items-center"><Chevron /></div>
          <div className="mr-auto h-[29px] w-[15px] shrink-0 bg-[#cdcdcd]" />
        </div>
      </div>
    </div>
  );
}

function Canvas() {
  const title = `${TABLEAU} font-light text-[20px] tracking-[0.15px] text-[#333] whitespace-nowrap`;
  return (
    <div className="flex min-w-0 flex-1 bg-[#f5f5f5]">
      <div className="flex w-[1000px] shrink-0 overflow-hidden bg-white">
        <div className="flex w-[420px] shrink-0 flex-col">
          <div className={`${title} h-[55px] shrink-0 pt-[17px] pl-[16px] leading-[28px]`}>Sheet 6</div>
          <BubbleChart />
          <div className={`${title} h-[56px] shrink-0 pt-[13px] pl-[16px] leading-[28px]`}>Sheet 4</div>
          <TreeMap />
        </div>
        <div className="flex w-[410px] shrink-0 flex-col">
          <div className={`${title} h-[56px] shrink-0 pt-[17px] pl-[8px] leading-[28px]`}>Sheet 5</div>
          <PriceChart />
        </div>
        <Legends />
      </div>
      <div className="flex-1" />
      <div className="flex w-[15px] shrink-0 flex-col items-center border-l border-white bg-[#f0f0f0]">
        <div className="flex h-[17px] shrink-0 items-center"><Chevron /></div>
        <div className="h-[413px] w-full shrink-0 bg-[#cdcdcd]" />
        <div className="mt-auto flex h-[17px] shrink-0 items-center"><Chevron down /></div>
      </div>
    </div>
  );
}

const GridIcon = () => (
  <svg width="12" height="12" viewBox="0 0 12 12" fill="none" stroke="#666" className="mb-[2px] shrink-0"><path d="M.5 .5h10v10H.5zM5.500 .5v10M.5 5.500h10" /></svg>
);
const BookIcon = () => (
  <svg width="13" height="13" viewBox="0 0 13 13" fill="none" stroke="#666" className="mb-[2px] shrink-0"><path d="M.5 1c2-.6 4 0 5.500 1C7.500 1 9.500.4 11.500 1v9c-2-.4-4 0-5.500 1.500C4.500 10 2.500 9.600.5 10zM6 2v9.500" /></svg>
);

const TABS: [string, string, "s" | "d" | "b"][] = [
  ["Sheet 1", "w-[56px]", "s"], ["Sheet 2", "w-[57px]", "s"], ["Sheet 3", "w-[57px]", "s"], ["Sheet 4", "w-[57px]", "s"], ["Sheet 5", "w-[57px]", "s"],
  ["Sheet 6", "w-[57px]", "s"], ["Sheet 7", "w-[56px]", "s"], ["Sheet 8", "w-[57px]", "s"], ["Sheet 9", "w-[57px]", "s"],
  ["Dashboard 1", "w-[102px]", "d"], ["Dashboard 2", "w-[104px]", "d"], ["Dashboard 3", "w-[104px]", "d"], ["Dashboard 4", "w-[104px]", "d"], ["Story 1", "w-[71px]", "b"],
];

function Tabs() {
  return (
    <div className={`${BENTON} flex h-[31px] shrink-0 border-y border-[#cdcdcd] bg-[#e6e6e6] text-[11.700px] leading-[29px] tracking-[-0.05px] text-[#5c5c5c]`}>
      <div className="flex w-[131px] shrink-0 items-center border-r border-[#c6c6c6] pl-[10px]">
        <svg width="9" height="12" viewBox="0 0 9 12" fill="none" stroke="#666" className="mb-[2px]"><ellipse cx="4" cy="2.300" rx="3.500" ry="1.800" /><path d="M.5 2.300v7c0 2.200 7 2.200 7 0v-7" /></svg>
        <span className="pt-[2px] pl-[5px] tracking-[0.02px]">Data Source</span>
      </div>
      {TABS.map(([n, w, k]) => (
        <div key={n} className={`flex shrink-0 items-center border-r border-[#c6c6c6] whitespace-nowrap ${w} ${k === "s" ? "pl-[6px]" : "gap-[4px] pl-[7px]"} ${n === "Dashboard 3" ? "bg-[#fafafa] pb-[1px] font-semibold tracking-[-0.2px] text-[#444]" : ""}`}>
          {k === "d" && <GridIcon />}
          {k === "b" && <BookIcon />}
          <span className={n === "Dashboard 3" ? "" : "pt-[2px]"}>{n}</span>
        </div>
      ))}
      <Cell x={1126} y={678} w={96} h={29}>
        <path d="M1157.500 678v29M1190.500 678v29M1221.500 678v29" stroke="#c6c6c6" />
        <g stroke="#666">
          <path d="M1147.500 693v-6.500h-11v11h7M1139.500 695v-2M1141.500 695v-5M1143.500 694v-3" />
          <path d="M1179.500 693v-6.500h-11v11h7M1174.500 687v10M1169 692.500h10" />
          <path d="M1206 698c-1.500-1-3.500-1.500-5.500-1v-10c2-.5 4 0 5.500 1 1.500-1 3.500-1.500 5.500-1v6M1206 688v8" />
        </g>
        <Plus x={1147} y={697} s={4} c="#555" w={2} />
        <Plus x={1179} y={697} s={4} c="#555" w={2} />
        <Plus x={1211} y={697} s={4} c="#555" w={2} />
      </Cell>
    </div>
  );
}

function StatusBar() {
  return (
    <div className="flex h-[20px] shrink-0 justify-end bg-[#ebebeb]">
      <Cell x={990} y={708} w={374} h={20}>
        <path d="M999.500 708v20M1126.500 708v20M1153.500 708v20M1180.500 708v20M1227.500 708v20M1298.500 708v20" stroke="#d0d0d0" />
        <g fill="#b9b9b9">
          <path d="M1236 714h1.500v7h-1.500zM1242 714v7l-4-3.500zM1257 714v7l-4-3.500zM1269 714v7l4-3.500zM1284 714v7l4-3.500zM1288.500 714h1.500v7h-1.500z" />
          {[1307, 1311, 1315].map((x) => [712, 716, 720].map((y) => <rect key={`${x}-${y}`} x={x} y={y} width="3" height="3" />))}
          <path d="M1328 712h11v7h-11zM1328 720h3v3h-3zM1332 720h3v3h-3zM1336 720h3v3h-3z" />
        </g>
        <path d="M1349 712h11v11h-11z" fill="#666" />
      </Cell>
    </div>
  );
}

function Chrome({ x, y }: { x: number; y: number }) {
  return (
    <g transform={`translate(${x} ${y})`}>
      <circle r="11.500" fill="#fbc116" />
      <path d="M0 0L-9.960 -5.750A11.500 11.500 0 0 1 9.960 -5.750L0 -5.300z" fill="#e33b2e" />
      <path d="M-9.960 -5.750A11.500 11.500 0 0 0 0 11.500L4.700 2.700 0 4-4.600 2.700z" fill="#2da94f" />
      <path d="M-9.960 -5.750h20L4 0-4 0z" fill="#e33b2e" />
      <circle r="5.500" fill="#fff" /><circle r="4.300" fill="#3f7de8" />
    </g>
  );
}

function TaskBar() {
  const under = "#76b9ed";
  return (
    <div className={`${TABLEAU} flex h-[40px] shrink-0 bg-linear-to-r from-[#060a0e] via-[#1d1510] to-[#0d1112]`}>
      <Cell x={0} y={728} w={48} h={40}>
        <path d="M16 742.300l6.800-1v6.200H16zM23.800 741.200l8.200-1.200v7.500h-8.200zM16 748.500h6.800v6.200l-6.800-1zM23.800 748.500H32v7.500l-8.200-1.200z" fill="#fff" />
      </Cell>
      <div className="flex w-[344px] shrink-0 items-center border-t border-[#c8c8c8] bg-[#f2f2f2]">
        <svg width="40" height="38" viewBox="48 729 40 38" fill="none"><circle cx="67.500" cy="747.500" r="9.200" stroke="#111" strokeWidth="2.800" /></svg>
        <span className="flex-1 text-[14px] tracking-[-0.1px] text-[#333]">Type here to search</span>
        <svg width="34" height="38" viewBox="358 729 34 38" fill="none" stroke="#222" strokeWidth="1.200"><rect x="369" y="740" width="5" height="9.500" rx="2" /><path d="M366.500 747v2c0 4 10 4 10 0v-2M371.500 752v3M369 755.500h5" /></svg>
      </div>
      <Cell x={392} y={728} w={98} h={40}>
        <g stroke="#fff" strokeWidth="1.200"><path d="M408.500 744.500h9v7h-9zM408 742.500v-2M418 742.500v-2M408 753.500v2M418 753.500v2M408 741.500h10M408 754.500h10M422.500 741v3M422.500 749v7" /></g>
        <path d="M421 745h3v3h-3z" fill="#fff" />
        <path d="M457.500 746.500c1-5.500 5-8.500 10-8.500 6 0 9.500 4.200 9.500 9.500v2.500h-13.500c.3 3 3 4.500 6 4.500 2.300 0 4.500-.7 6.300-1.700v4.200c-2 1-4.500 1.500-7 1.500-6 0-9.800-3.500-9.800-8.500 0-3 1.700-6 5-7.500-1 1.200-1.300 2.500-1.400 3.500h8.200c0-2.800-1.200-4.300-4-4.300-3.700 0-7 2-9.300 4.800z" fill="#0b78d4" />
      </Cell>
      <Cell x={490} y={728} w={100} h={40}>
        <path d="M505 739h7l1.500 2H526v15h-21z" fill="#f5c956" /><path d="M505 743h21v13h-21z" fill="#fde08c" />
        <path d="M509 748.500h14v8.500h-3.500v-5h-7v5H509z" fill="#38b2e8" />
        <path d="M496 766h31v2h-31z" fill={under} /><path d="M528 766h8v2h-8z" fill="#56809f" />
        <path d="M560.500 744v-2.500a4.200 4.200 0 0 1 8.500 0v2.500" stroke="#fff" strokeWidth="1.300" />
        <path d="M553.500 743h22v16h-21z" fill="#fff" />
        <path d="M559 745h5v5h-5z" fill="#f1511b" /><path d="M565 745h5v5h-5z" fill="#80cc28" /><path d="M559 751h5v5h-5z" fill="#00adef" /><path d="M565 751h5v5h-5z" fill="#fbbc09" />
      </Cell>
      <Cell x={590} y={728} w={98} h={40}>
        <Chrome x={614} y={748} /><Chrome x={663} y={748} />
        <circle cx="668.500" cy="755" r="7" fill="#a99189" /><path d="M662 753a7 6 0 0 1 13 0z" fill="#6b625f" /><ellipse cx="668.500" cy="755.500" rx="4.200" ry="4.700" fill="#e0a88c" /><path d="M667 758h3" stroke="#b05648" /><path d="M666.500 754.500h1M670 754.500h1" stroke="#40302a" />
        <path d="M643 766h40v2h-40z" fill={under} />
      </Cell>
      <Cell x={688} y={728} w={49} h={40}>
        <circle cx="712" cy="748" r="11.200" stroke="#9e1a20" strokeWidth="1.500" /><circle cx="712" cy="748" r="8.300" fill="#c4171f" />
        <path d="M692 766h40v2h-40z" fill={under} />
      </Cell>
      <Cell x={737} y={728} w={48} h={40}>
        <path d="M737 728h48v40h-48z" fill="#57504b" /><path d="M750 737h22v22h-22z" fill="#fafafa" />
        <TableauMark x={761} y={748} k={1.150} mono="#2e7fb4" /><path d="M737 766h48v2h-48z" fill={under} />
      </Cell>
      <Cell x={785} y={728} w={100} h={40}>
        <path d="M809 739h13v18h-13z" fill="#fff" stroke="#2b579a" /><path d="M812 743h8M812 746h8M812 749h8M812 752h8" stroke="#2b579a" />
        <path d="M798 739l13-2.500v23L798 757z" fill="#2b579a" />
        <text x="799.500" y="752" fill="#fff" fontSize="9.500" fontWeight="700">W</text>
        <path d="M790 766h31v2h-31z" fill={under} /><path d="M822 766h8v2h-8z" fill="#56809f" />
        <path d="M848.500 737h21v20h-21z" fill="#c70b0c" />
        <path d="M852 753.500c3-1.500 6.500-8 6.500-12.500 0-1.500-1.500-1.500-1.300 0 .5 4 4.500 8 8.500 8 2 0 1.500-1.700-.5-1.700-4 0-9 1.500-12 3.700-2 1.500-2.500 3-1.200 2.500z" stroke="#fff" strokeWidth="1.300" />
        <path d="M839 766h31v2h-31z" fill={under} /><path d="M871 766h8v2h-8z" fill="#56809f" />
      </Cell>
      <Cell x={885} y={728} w={50} h={40}>
        <path d="M900.500 752h15l2.500 7h-20z" fill="#f07c0c" /><path d="M906.500 737h3l5 17c-3 2-10 2-13 0z" fill="#f58a10" />
        <path d="M905.300 741.500h5.400l1.200 4h-7.800zM903.200 748.500h9.600l1.100 3.500c-3 1.500-9 1.500-11.800 0z" fill="#f2f2f2" />
      </Cell>
      <Cell x={935} y={728} w={60} h={40}>
        <path d="M953 738.500a11 10.500 0 0 1 14.500 12.500M950 740.500a10.500 10.500 0 0 0-3.500 8.500" stroke="#fff" strokeWidth="1.800" />
        <path d="M946 750.500l5.500-6 5.500 5 3-2.500 7 6.500a11 9 0 0 1-5 5l-5.500-6-4 4.500 2 2a11 9 0 0 1-8.500-8.500z" fill="#fff" /><circle cx="959.500" cy="743.500" r="1.700" fill="#fff" />
        <path d="M937 766h40v2h-40z" fill={under} />
      </Cell>
      <div className="flex-1" />
      <Cell x={1070} y={728} w={141} h={40}>
        <g stroke="#fff" strokeWidth="1.200">
          <circle cx="1090" cy="744" r="3" /><circle cx="1085" cy="749" r="2.700" /><path d="M1080.500 756c.5-5.500 8.500-5.500 9 0M1087 748.500c3-2 7-.5 7.200 3.500" />
          <path d="M1117.500 751l5-5 5 5" strokeWidth="1.400" />
          <path d="M1141.500 744.500h11v8h-11z" /><path d="M1163.500 746h2.500l3-3.500v11l-3-3.500h-2.500zM1171.500 745.500c1.300 1.500 1.300 3.500 0 5M1174 743.500c2.300 2.500 2.300 6.500 0 9M1176.500 742c3 3.500 3 8.500 0 12" />
          <path d="M1187.500 742.500h5M1188.800 740.500l2.400 4M1191.200 740.500l-2.400 4" strokeWidth=".9" />
        </g>
        <path d="M1143.500 746.500h4v4h-4z" fill="#fff" /><circle cx="1151.500" cy="751.500" r="4" fill="#2f9a3a" /><path d="M1151.500 748.500v5.500M1149.800 750v1.500h3.400V750" stroke="#fff" />
        <g stroke="#8a8a8a" strokeWidth="1.200"><path d="M1190 754a11 11 0 0 1 11-10M1193 754a8 8 0 0 1 8-7.500M1196 754a5 5 0 0 1 5-4.500" /></g>
        <circle cx="1199.800" cy="753" r="1.300" fill="#aaa" />
      </Cell>
      <span className="w-[34px] shrink-0 pl-[2px] text-[11.500px] leading-[40px] text-white">ENG</span>
      <div className="flex w-[66px] shrink-0 flex-col items-center pt-[1px] text-[11.500px] leading-[18px] tracking-[-0.25px] text-white">
        <span>12:21</span>
        <span>13-10-2023</span>
      </div>
      <Cell x={1311} y={728} w={55} h={40}>
        <path d="M1325.500 740.500h15v12h-4.500v3.500l-3.500-3.500h-7z" stroke="#fff" strokeWidth="1.200" />
        <path d="M1361.500 728v40" stroke="#555" />
      </Cell>
    </div>
  );
}

export default function App() {
  return (
    <div className="flex h-[768px] w-[1366px] flex-col overflow-hidden bg-[#1b1a19]">
      <div className="flex h-[728px] w-[1364px] shrink-0 flex-col overflow-hidden bg-white">
        <TitleBar />
        <MenuBar />
        <Toolbar />
        <div className="flex h-[593px] shrink-0">
          <Sidebar />
          <Canvas />
        </div>
        <Tabs />
        <StatusBar />
      </div>
      <TaskBar />
    </div>
  );
}
